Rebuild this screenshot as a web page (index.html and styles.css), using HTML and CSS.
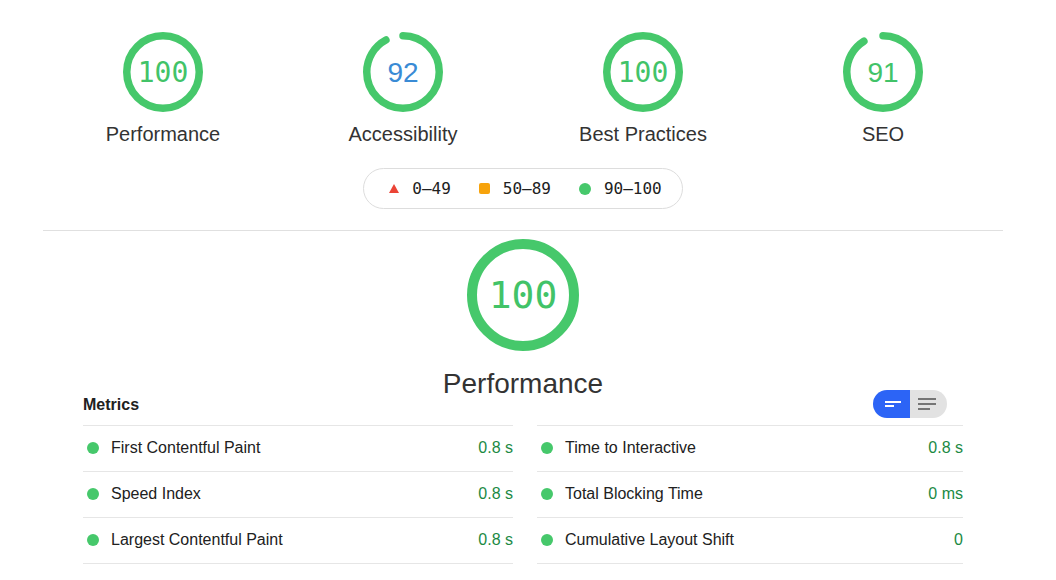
FILE: index.html
```html
<!DOCTYPE html>
<html lang="en">
<head>
<meta charset="utf-8">
<title>Lighthouse Report</title>
<link rel="stylesheet" href="styles.css">
</head>
<body>
<div class="report">
  <div class="gauges">
    <div class="gauge-item">
      <div class="gauge">
        <svg viewBox="0 0 80 80"><circle class="arc" cx="40" cy="40" r="36.25"/></svg>
        <span class="gauge-score mono">100</span>
      </div>
      <div class="gauge-label">Performance</div>
    </div>
    <div class="gauge-item">
      <div class="gauge">
        <svg viewBox="0 0 80 80"><circle class="arc" cx="40" cy="40" r="36.25" stroke-dasharray="209.6 227.8" transform="rotate(-90 40 40)"/></svg>
        <span class="gauge-score sans blue">92</span>
      </div>
      <div class="gauge-label">Accessibility</div>
    </div>
    <div class="gauge-item">
      <div class="gauge">
        <svg viewBox="0 0 80 80"><circle class="arc" cx="40" cy="40" r="36.25"/></svg>
        <span class="gauge-score mono">100</span>
      </div>
      <div class="gauge-label">Best Practices</div>
    </div>
    <div class="gauge-item">
      <div class="gauge">
        <svg viewBox="0 0 80 80"><circle class="arc" cx="40" cy="40" r="36.25" stroke-dasharray="207.3 227.8" transform="rotate(-90 40 40)"/></svg>
        <span class="gauge-score sans">91</span>
      </div>
      <div class="gauge-label">SEO</div>
    </div>
  </div>

  <div class="legend">
    <div class="legend-item"><span class="tri"></span><span>0–49</span></div>
    <div class="legend-item"><span class="sq"></span><span>50–89</span></div>
    <div class="legend-item"><span class="circ"></span><span>90–100</span></div>
  </div>

  <div class="divider"></div>

  <section class="category">
    <div class="big-gauge">
      <svg viewBox="0 0 112 112"><circle class="arc big" cx="56" cy="56" r="51"/></svg>
      <span class="big-score mono">100</span>
    </div>
    <div class="big-label">Performance</div>

    <div class="metrics">
      <div class="metrics-header">
        <h2>Metrics</h2>
        <div class="toggle">
          <div class="toggle-btn active">
            <svg width="16" height="8" viewBox="0 0 16 8"><rect x="0" y="1" width="16" height="2" fill="#fff"/><rect x="0" y="5" width="9" height="2" fill="#fff"/></svg>
          </div>
          <div class="toggle-btn">
            <svg width="18" height="12" viewBox="0 0 18 12"><rect x="0" y="0" width="18" height="2" fill="#757575"/><rect x="0" y="5" width="18" height="2" fill="#757575"/><rect x="0" y="10" width="12" height="2" fill="#757575"/></svg>
          </div>
        </div>
      </div>
      <div class="metrics-grid">
        <div class="metric-col">
          <div class="metric"><span class="dot"></span><span class="metric-name">First Contentful Paint</span><span class="metric-value">0.8 s</span></div>
          <div class="metric"><span class="dot"></span><span class="metric-name">Speed Index</span><span class="metric-value">0.8 s</span></div>
          <div class="metric"><span class="dot"></span><span class="metric-name">Largest Contentful Paint</span><span class="metric-value">0.8 s</span></div>
        </div>
        <div class="metric-col">
          <div class="metric"><span class="dot"></span><span class="metric-name">Time to Interactive</span><span class="metric-value">0.8 s</span></div>
          <div class="metric"><span class="dot"></span><span class="metric-name">Total Blocking Time</span><span class="metric-value">0 ms</span></div>
          <div class="metric"><span class="dot"></span><span class="metric-name">Cumulative Layout Shift</span><span class="metric-value">0</span></div>
        </div>
      </div>
    </div>
  </section>
</div>
</body>
</html>
```

FILE: styles.css
```css
body {
  margin: 0;
  background: #fff;
  font-family: "Liberation Sans", Arial, sans-serif;
  color: #212121;
}

.mono { font-family: "DejaVu Sans Mono", "Liberation Mono", monospace; }
.sans { font-family: "Liberation Sans", Arial, sans-serif; }

.report {
  width: 960px;
  margin-left: 43px;
  padding-top: 32px;
}

.gauges { display: flex; }

.gauge-item {
  flex: 1;
  display: flex;
  flex-direction: column;
  align-items: center;
}

.gauge {
  display: grid;
  width: 80px;
  height: 80px;
}

.gauge > *, .big-gauge > * { grid-area: 1 / 1; }

.gauge svg { width: 80px; height: 80px; display: block; }

.arc {
  fill: none;
  stroke: #46c86b;
  stroke-width: 7.5;
  stroke-linecap: round;
}

.arc.big { stroke-width: 10; }

.gauge-score {
  place-self: center;
  padding-top: 2px;
  font-size: 28px;
  line-height: 1;
  color: #42c368;
}

.gauge-score.blue { color: #3a8bd5; }

.gauge-label {
  margin-top: 10px;
  font-size: 20px;
  line-height: 24px;
  color: #333;
}

.legend {
  margin: 22px auto 0;
  width: fit-content;
  height: 41px;
  box-sizing: border-box;
  border: 1px solid #dddddd;
  border-radius: 21px;
  display: flex;
  align-items: center;
  gap: 28px;
  padding: 0 20px 0 25px;
  font-family: "DejaVu Sans Mono", monospace;
  font-size: 16px;
  color: #212121;
}

.legend-item {
  display: flex;
  align-items: center;
  gap: 13px;
}

.tri {
  width: 0;
  height: 0;
  border-left: 5px solid transparent;
  border-right: 5px solid transparent;
  border-bottom: 9px solid #eb4436;
}

.sq {
  width: 11px;
  height: 11px;
  border-radius: 2px;
  background: #f7a30c;
}

.circ {
  width: 12px;
  height: 12px;
  border-radius: 50%;
  background: #46c86b;
}

.divider {
  margin-top: 21px;
  border-top: 1px solid #e0e0e0;
}

.big-gauge {
  display: grid;
  width: 112px;
  height: 112px;
  margin: 8px auto 0;
}

.big-gauge svg { width: 112px; height: 112px; display: block; }

.big-score {
  place-self: center;
  font-size: 38px;
  line-height: 1;
  color: #42c368;
}

.big-label {
  margin-top: 17px;
  margin-bottom: -10px;
  text-align: center;
  font-size: 28px;
  line-height: 32px;
  color: #333;
}

.metrics { padding: 0 40px; }

.metrics-header {
  display: flex;
  justify-content: space-between;
  align-items: center;
  height: 28px;
  padding-bottom: 7px;
}

.metrics-header h2 {
  margin: 2px 0 0;
  font-size: 16px;
  font-weight: bold;
  color: #212121;
}

.toggle {
  display: flex;
  margin-right: 16px;
  height: 28px;
  border-radius: 14px;
  overflow: hidden;
}

.toggle-btn {
  width: 37px;
  height: 28px;
  display: flex;
  align-items: center;
  justify-content: flex-start;
  padding-left: 8px;
  box-sizing: border-box;
  background: #e2e2e2;
}

.toggle-btn.active {
  background: #2c64f6;
  padding-left: 12px;
}

.metrics-grid {
  display: grid;
  grid-template-columns: 430px 426px;
  column-gap: 24px;
}

.metric-col { border-bottom: 1px solid #e6e6e6; }

.metric {
  display: flex;
  align-items: center;
  height: 43px;
  padding-bottom: 2px;
  border-top: 1px solid #e6e6e6;
  font-size: 16px;
}

.dot {
  width: 12px;
  height: 12px;
  margin: 1px 12px 0 4px;
  border-radius: 50%;
  background: #46c86b;
  flex: none;
}

.metric-name { color: #212121; }

.metric-value {
  margin-left: auto;
  color: #1b8a44;
}
```
